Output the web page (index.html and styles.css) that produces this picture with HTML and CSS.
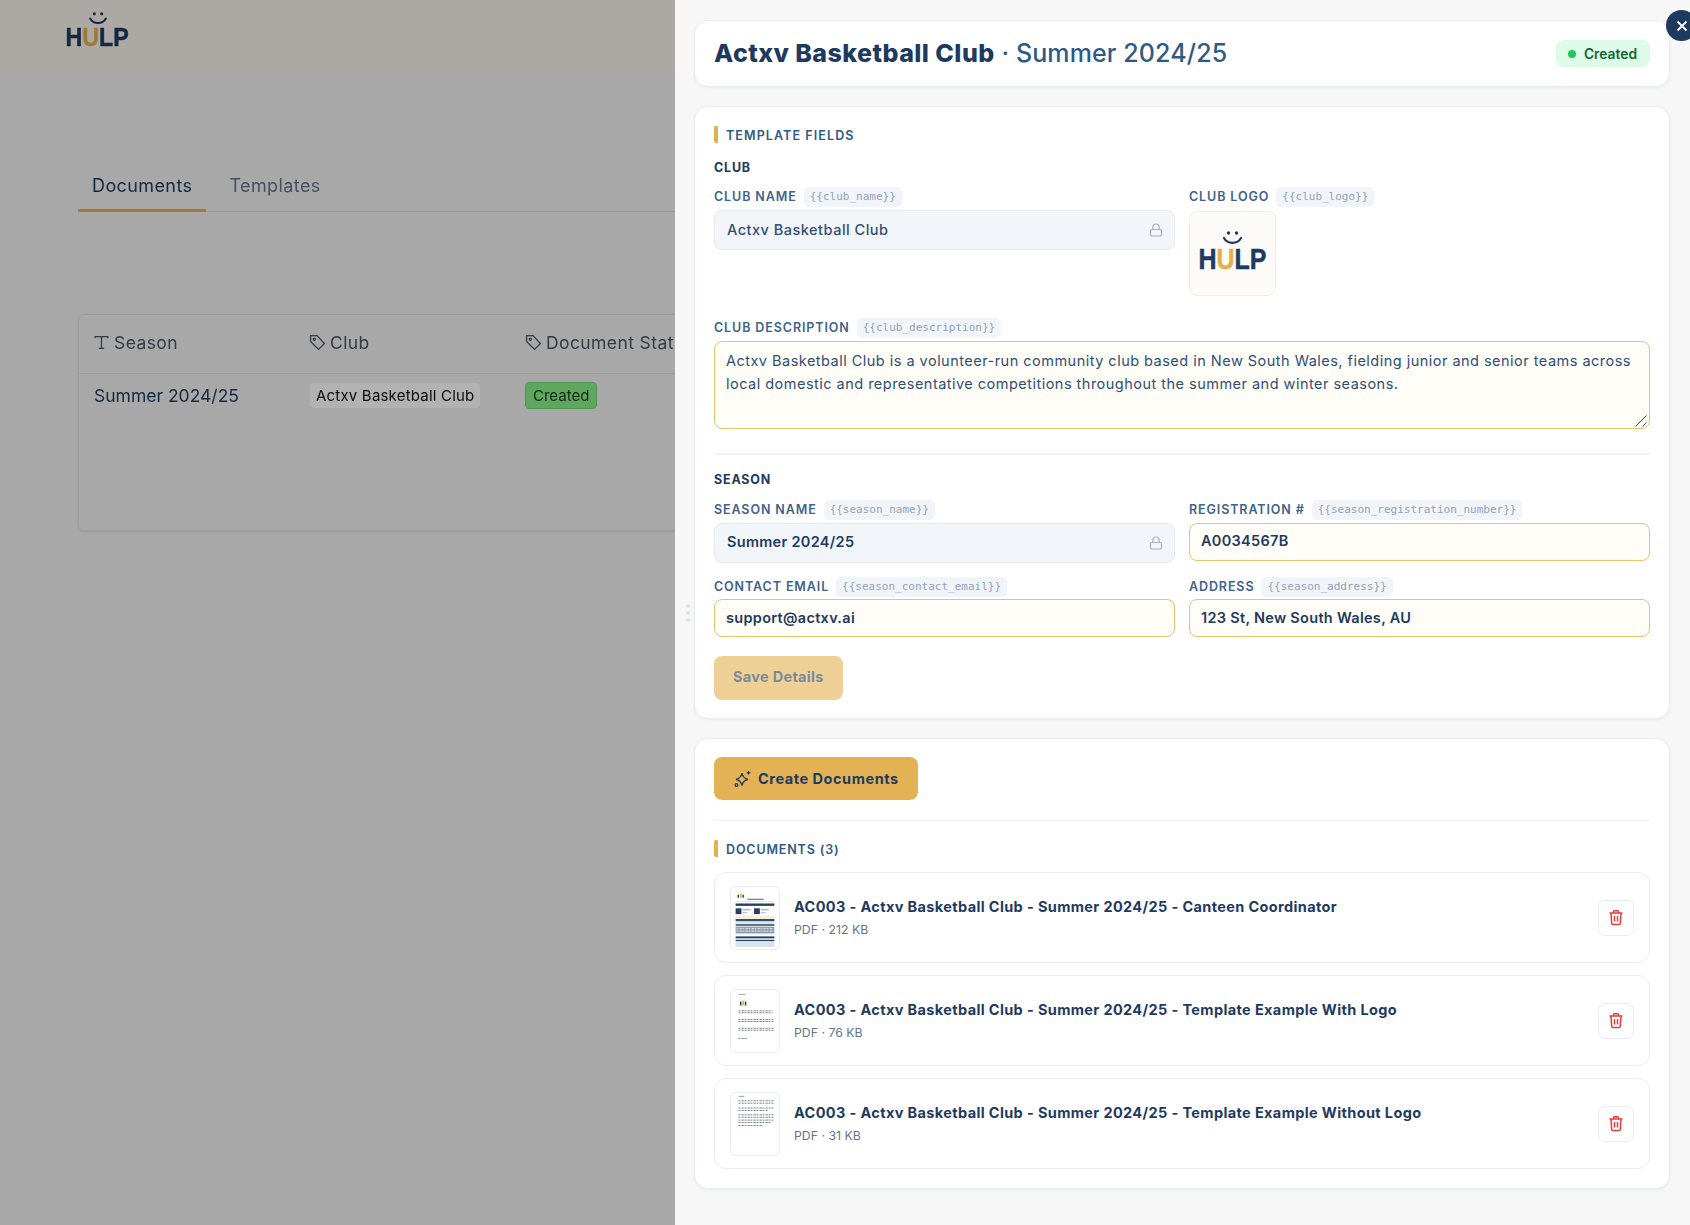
FILE: index.html
```html
<!DOCTYPE html>
<html lang="en">
<head>
    <meta charset="UTF-8">
    <title>Documents</title>
    <link rel="stylesheet" href="styles.css">
</head>
<body>
    <div class="page">
        <header class="topbar">
            <div class="logo logo-small">
                <svg class="smile" viewBox="0 0 20 14"><circle cx="6" cy="2" r="1.7"/><circle cx="14" cy="2" r="1.7"/><path d="M1.5 7C5 13.5 15 13.5 18.5 7"/></svg>
                <div class="logo-word">H<span class="gold">U</span>LP</div>
            </div>
        </header>
        <main class="content">
            <nav class="tabs">
                <a class="tab active">Documents</a>
                <a class="tab">Templates</a>
            </nav>
            <div class="table-card">
                <div class="table-row table-head">
                    <div class="cell"><svg class="head-icon" viewBox="0 0 16 16"><path d="M2 4V2.5h12V4M8 2.5v11M5.5 13.5h5"/></svg>Season</div>
                    <div class="cell"><svg class="head-icon" viewBox="0 0 16 16"><path d="M1.5 1.5h6l7 7.5-5.500 5.500-7.500-7.500z"/><circle cx="5" cy="5" r="1"/></svg>Club</div>
                    <div class="cell"><svg class="head-icon" viewBox="0 0 16 16"><path d="M1.5 1.5h6l7 7.5-5.500 5.500-7.500-7.500z"/><circle cx="5" cy="5" r="1"/></svg>Document Status</div>
                </div>
                <div class="table-row">
                    <div class="cell">Summer 2024/25</div>
                    <div class="cell"><span class="tag">Actxv Basketball Club</span></div>
                    <div class="cell"><span class="status-tag">Created</span></div>
                </div>
            </div>
        </main>
    </div>
    <div class="backdrop"></div>

    <aside class="drawer">
        <button class="close-btn"><svg viewBox="0 0 14 14"><path d="M2.5 2.5l9 9M11.5 2.5l-9 9"/></svg></button>
        <div class="drag-handle"><i></i><i></i><i></i></div>

        <section class="card title-card">
            <h1><strong>Actxv Basketball Club</strong> · Summer 2024/25</h1>
            <span class="badge"><i class="dot"></i>Created</span>
        </section>

        <section class="card fields-card">
            <h2 class="bar-heading">TEMPLATE FIELDS</h2>
            <h3 class="group-title">CLUB</h3>
            <div class="field-grid">
                <div class="field">
                    <label class="label">CLUB NAME <code>{{club_name}}</code></label>
                    <div class="input locked">Actxv Basketball Club
                        <svg class="lock" viewBox="0 0 14 14"><rect x="1.5" y="6.5" width="11" height="6.5" rx="1.2"/><path d="M3.8 6.5V4.2a3.2 3.2 0 0 1 6.4 0v2.300"/></svg>
                    </div>
                </div>
                <div class="field">
                    <label class="label">CLUB LOGO <code>{{club_logo}}</code></label>
                    <div class="logo-box">
                        <div class="logo">
                            <svg class="smile" viewBox="0 0 20 14"><circle cx="6" cy="2" r="1.7"/><circle cx="14" cy="2" r="1.7"/><path d="M1.5 7C5 13.5 15 13.5 18.5 7"/></svg>
                            <div class="logo-word">H<span class="gold">U</span>LP</div>
                        </div>
                    </div>
                </div>
                <div class="field wide">
                    <label class="label">CLUB DESCRIPTION <code>{{club_description}}</code></label>
                    <div class="description-wrap">
                        <textarea class="input editable description" readonly>Actxv Basketball Club is a volunteer-run community club based in New South Wales, fielding junior and senior teams across
local domestic and representative competitions throughout the summer and winter seasons.</textarea>
                        <svg class="grip" viewBox="0 0 12 12"><path d="M0.5 11.500L11.500 0.500M7.500 11.500L11.500 7.500"/></svg>
                    </div>
                </div>
            </div>
            <hr class="rule">
            <h3 class="group-title">SEASON</h3>
            <div class="field-grid season-grid">
                <div class="field">
                    <label class="label">SEASON NAME <code>{{season_name}}</code></label>
                    <div class="input locked strong">Summer 2024/25
                        <svg class="lock" viewBox="0 0 14 14"><rect x="1.5" y="6.5" width="11" height="6.5" rx="1.2"/><path d="M3.8 6.5V4.2a3.2 3.2 0 0 1 6.4 0v2.300"/></svg>
                    </div>
                </div>
                <div class="field">
                    <label class="label">REGISTRATION # <code>{{season_registration_number}}</code></label>
                    <div class="input editable strong">A0034567B</div>
                </div>
                <div class="field">
                    <label class="label">CONTACT EMAIL <code>{{season_contact_email}}</code></label>
                    <div class="input editable strong">support@actxv.ai</div>
                </div>
                <div class="field">
                    <label class="label">ADDRESS <code>{{season_address}}</code></label>
                    <div class="input editable strong">123 St, New South Wales, AU</div>
                </div>
            </div>
            <button class="btn save-btn">Save Details</button>
        </section>

        <section class="card docs-card">
            <button class="btn create-btn">
                <svg viewBox="0 0 18 18"><path d="M8 3c.7 3.800 2.500 5.600 6 6.300-3.500.7-5.300 2.500-6 6.300-.7-3.800-2.500-5.600-6-6.300 3.500-.7 5.300-2.500 6-6.300z"/><path d="M14.500 1v3.600M12.700 2.800h3.600"/><circle cx="2.500" cy="15" r="1.400"/></svg>
                Create Documents
            </button>
            <hr class="rule thin">
            <h2 class="bar-heading docs-heading">DOCUMENTS (3)</h2>
            <ul class="doc-list">
                <li class="doc">
                    <div class="thumb">
                        <svg viewBox="0 0 48 64">
                            <rect x="5" y="5" width="9" height="7" fill="#fbf8ee"/>
                            <rect x="6" y="8" width="1.5" height="3" fill="#24425f"/><rect x="8.5" y="7" width="1.5" height="4" fill="#d9a83e"/><rect x="11" y="8" width="1.5" height="3" fill="#24425f"/>
                            <rect x="16" y="12" width="17" height="1.5" fill="#7f8b98"/>
                            <rect x="4" y="14.5" width="40" height="1" fill="#f8e6bb"/>
                            <rect x="4" y="17" width="40" height="2.5" fill="#24425f"/>
                            <rect x="4" y="22" width="6" height="6" fill="#24425f"/><rect x="23" y="22" width="6" height="6" fill="#24425f"/>
                            <rect x="11" y="23" width="8" height="1" fill="#8897a8"/><rect x="30" y="23" width="8" height="1" fill="#8897a8"/>
                            <rect x="11" y="26" width="5" height="1" fill="#aab5c0"/><rect x="30" y="26" width="5" height="1" fill="#aab5c0"/>
                            <rect x="4" y="29.5" width="40" height="3" fill="#fcefcf"/>
                            <rect x="4" y="33" width="40" height="2.5" fill="#2f4d6c"/>
                            <rect x="4" y="35.5" width="40" height="3" fill="#dbe5ef"/>
                            <rect x="4" y="38.5" width="40" height="1.5" fill="#24425f"/>
                            <rect x="4" y="41" width="40" height="7" fill="#8f9dac"/>
                            <path class="dash dark" d="M5 43h38M5 45.500h38"/>
                            <rect x="4" y="51" width="40" height="2" fill="#24425f"/>
                            <rect x="4" y="54.5" width="40" height="1.5" fill="#24425f"/>
                            <rect x="4" y="56" width="40" height="6" fill="#d6e2ee"/>
                        </svg>
                    </div>
                    <div class="doc-text">
                        <div class="doc-name">AC003 - Actxv Basketball Club - Summer 2024/25 - Canteen Coordinator</div>
                        <div class="doc-meta">PDF · 212 KB</div>
                    </div>
                    <button class="delete-btn"><svg viewBox="0 0 16 16"><path d="M1.5 3.5h13M5.5 3.5V2.200q0-.9.9-.9h3.200q.9 0 .9.9v1.300M3 3.5l.6 10q.1 1.500 1.500 1.500h5.800q1.400 0 1.500-1.500l.6-10M6.500 6.500v5.500M9.500 6.500v5.500"/></svg></button>
                </li>
                <li class="doc">
                    <div class="thumb">
                        <svg viewBox="0 0 48 64">
                            <rect x="7" y="4" width="7" height="1" fill="#9aa7b5"/>
                            <rect x="7" y="7" width="10" height="10" fill="#fbf8ee"/>
                            <rect x="8.5" y="12" width="1.5" height="4" fill="#24425f"/><rect x="11" y="11" width="1.5" height="5" fill="#d9a83e"/><rect x="13.5" y="12" width="1.5" height="4" fill="#24425f"/>
                            <path class="dash" d="M7 21.500h35M7 23.500h35M7 30.500h36M7 32.500h36M7 39.500h36M7 41.500h36M7 50h9"/>
                        </svg>
                    </div>
                    <div class="doc-text">
                        <div class="doc-name">AC003 - Actxv Basketball Club - Summer 2024/25 - Template Example With Logo</div>
                        <div class="doc-meta">PDF · 76 KB</div>
                    </div>
                    <button class="delete-btn"><svg viewBox="0 0 16 16"><path d="M1.5 3.5h13M5.5 3.5V2.200q0-.9.9-.9h3.200q.9 0 .9.9v1.300M3 3.5l.6 10q.1 1.500 1.500 1.500h5.800q1.400 0 1.500-1.500l.6-10M6.500 6.500v5.500M9.500 6.500v5.500"/></svg></button>
                </li>
                <li class="doc">
                    <div class="thumb">
                        <svg viewBox="0 0 48 64">
                            <rect x="7" y="3" width="6" height="1" fill="#9aa7b5"/>
                            <path class="dash" d="M7 8h36M7 10.500h36M7 15.500h36M7 18h30M7 22.500h36M7 25h36M7 28h36M7 30.500h34M7 33.500h24"/>
                        </svg>
                    </div>
                    <div class="doc-text">
                        <div class="doc-name">AC003 - Actxv Basketball Club - Summer 2024/25 - Template Example Without Logo</div>
                        <div class="doc-meta">PDF · 31 KB</div>
                    </div>
                    <button class="delete-btn"><svg viewBox="0 0 16 16"><path d="M1.5 3.5h13M5.5 3.5V2.200q0-.9.9-.9h3.200q.9 0 .9.9v1.300M3 3.5l.6 10q.1 1.500 1.500 1.500h5.800q1.400 0 1.500-1.500l.6-10M6.500 6.500v5.500M9.500 6.500v5.500"/></svg></button>
                </li>
            </ul>
        </section>
    </aside>
</body>
</html>
```
FILE: styles.css
```css
* {
    box-sizing: border-box;
}

html, body {
    margin: 0;
    height: 100%;
    overflow: hidden;
}

body {
    font-family: Inter, "Noto Sans", sans-serif;
    color: #1e3a5f;
    background: #f1f1f1;
}

/* page behind the drawer */
.page {
    height: 100%;
    filter: blur(0.7px);
}

.topbar {
    height: 73px;
    padding: 12px 0 0 66px;
    background: #f6f3ec;
}

.logo {
    display: flex;
    flex-direction: column;
    align-items: center;
    width: 68px;
    padding-bottom: 6px;
}

.logo-small {
    width: 63px;
    padding-bottom: 0;
}

.smile {
    width: 21px;
    height: 14px;
    fill: #1e3a5f;
}

.smile path {
    fill: none;
    stroke: #1e3a5f;
    stroke-width: 2.2;
    stroke-linecap: round;
}

.logo-word {
    margin-top: 3px;
    font-family: "Liberation Sans", sans-serif;
    font-size: 29px;
    line-height: 22px;
    font-weight: 700;
    color: #1e3a5f;
    -webkit-text-stroke: 0.5px currentColor;
    transform: scaleX(0.86);
}

.logo-small .smile {
    width: 20px;
    height: 13px;
}

.logo-small .logo-word {
    margin-top: 3px;
    font-size: 25px;
    line-height: 18px;
    transform: scaleX(0.93);
}

.gold {
    color: #e3b04f;
}

.content {
    padding: 0 78px;
}

.tabs {
    display: flex;
    gap: 9px;
    height: 52px;
    margin-top: 87px;
    border-bottom: 1px solid #dde1e6;
}

.tab {
    display: block;
    padding: 0 14px;
    height: 52px;
    line-height: 52px;
    font-size: 18px;
    letter-spacing: 0.4px;
    color: #64748b;
}

.tab.active {
    color: #1e3a5f;
    border-bottom: 3px solid #e3b04f;
}

.table-card {
    margin-top: 102px;
    height: 217px;
    border: 1px solid #dde1e6;
    border-radius: 6px;
    box-shadow: 0 1px 3px rgba(0, 0, 0, 0.1);
}

.table-row {
    display: grid;
    grid-template-columns: 216px 216px 1fr;
    padding: 0 15px;
    align-items: center;
    height: 42px;
    font-size: 17.5px;
    color: #1e3a5f;
}

.table-head {
    height: 59px;
    padding-bottom: 3px;
    border-bottom: 1px solid #dde1e6;
    letter-spacing: 0.4px;
    color: #475569;
}

.cell {
    display: flex;
    align-items: center;
    white-space: nowrap;
}

.head-icon {
    width: 17px;
    height: 17px;
    margin: 0 4px 0 -1px;
    fill: none;
    stroke: #475569;
    stroke-width: 1.2;
}

.tag {
    padding: 3px 6px;
    font-size: 15px;
    letter-spacing: 0.2px;
    color: #111;
    background: #fff;
    border-radius: 4px;
}

.status-tag {
    margin-left: -1px;
    padding: 3px 7px;
    font-size: 15px;
    color: #1b3a1b;
    background: #88f088;
    border: 1px solid #6fd86f;
    border-radius: 4px;
}

.backdrop {
    position: fixed;
    inset: 0;
    background: rgba(0, 0, 0, 0.3);
}

/* drawer */
.drawer {
    position: fixed;
    top: 0;
    right: 0;
    bottom: 0;
    width: 1015px;
    padding: 20px 20px 0 19px;
    background: #f7f7f7;
}

.close-btn {
    position: absolute;
    top: 10px;
    left: 991px;
    width: 31px;
    height: 31px;
    padding: 0;
    border: none;
    border-radius: 50%;
    background: #1e3a5f;
    display: flex;
    align-items: center;
    justify-content: center;
}

.close-btn svg {
    width: 14px;
    height: 14px;
    fill: none;
    stroke: #fff;
    stroke-width: 1.8;
}

.drag-handle {
    position: absolute;
    top: 604px;
    left: 11px;
    display: flex;
    flex-direction: column;
    gap: 3px;
}

.drag-handle i {
    width: 4px;
    height: 4px;
    border-radius: 50%;
    background: #dfe2e5;
}

.card {
    background: #fff;
    border: 1px solid #e9edf1;
    border-radius: 14px;
    box-shadow: 0 1px 3px rgba(30, 58, 95, 0.06);
    padding: 0 19px;
    margin-bottom: 19px;
}

.title-card {
    display: flex;
    align-items: center;
    justify-content: space-between;
    height: 67px;
}

h1 {
    margin: 0 0 2px;
    font-size: 25px;
    font-weight: 500;
    color: #2f5a85;
    letter-spacing: 0.12px;
}

h1 strong {
    font-weight: 800;
    color: #1e3a5f;
    letter-spacing: 0.45px;
}

.badge {
    display: flex;
    align-items: center;
    gap: 8px;
    height: 27px;
    padding: 0 13px 0 12px;
    border-radius: 8px;
    background: #dcfce7;
    color: #166534;
    font-size: 13.8px;
    font-weight: 600;
}

.dot {
    width: 8px;
    height: 8px;
    border-radius: 50%;
    background: #22c55e;
}

.fields-card {
    height: 613px;
    padding-top: 19px;
}

.bar-heading {
    margin: 0;
    padding-left: 8px;
    height: 17px;
    line-height: 19px;
    font-size: 12.5px;
    font-weight: 600;
    letter-spacing: 1.1px;
    color: #2f5a85;
    border-left: 4px solid #e3b04f;
    border-radius: 2px;
}

.group-title {
    margin: 16px 0 0;
    height: 16px;
    line-height: 18px;
    font-size: 12.5px;
    font-weight: 700;
    letter-spacing: 0.8px;
    color: #1e3a5f;
}

.field-grid {
    display: grid;
    grid-template-columns: 461px 461px;
    column-gap: 14px;
    margin-top: 10px;
}

.field {
    min-width: 0;
}

.field.wide {
    grid-column: 1 / 3;
    margin-top: 20px;
}

.label {
    display: flex;
    align-items: center;
    gap: 7px;
    height: 21px;
    margin-top: 1px;
    margin-bottom: 3px;
    font-size: 12.5px;
    font-weight: 600;
    letter-spacing: 0.9px;
    color: #3f638a;
}

code {
    padding: 0 6px;
    height: 20px;
    line-height: 20px;
    font-family: "DejaVu Sans Mono", "Liberation Mono", monospace;
    font-size: 11px;
    font-weight: 400;
    letter-spacing: 0;
    color: #94a3b8;
    background: #f1f5f9;
    border-radius: 5px;
}

.input {
    display: flex;
    align-items: center;
    justify-content: space-between;
    width: 100%;
    padding: 0 12px 2px;
    font-family: inherit;
    font-size: 14.5px;
    font-weight: 500;
    letter-spacing: 0.5px;
    color: #1e3a5f;
    border-radius: 8px;
}

.input.strong {
    font-weight: 600;
    letter-spacing: 0.3px;
}

.locked {
    height: 40px;
    background: #f2f5f9;
    border: 1px solid #e6eaf0;
    color: #2f4f74;
}

.locked.strong {
    color: #1e3a5f;
}

.lock {
    width: 14px;
    height: 14px;
    margin: 2px -1px 0 0;
    fill: none;
    stroke: #a6b2c2;
    stroke-width: 1.2;
}

.editable {
    height: 38px;
    padding-left: 11px;
    background: #fffdf8;
    border: 1.5px solid #eec06c;
}

.description-wrap {
    position: relative;
    height: 88px;
}

.description {
    display: block;
    height: 88px;
    padding: 7px 11px;
    line-height: 23px;
    font-weight: 400;
    letter-spacing: 0.48px;
    color: #2f4f74;
    white-space: pre;
    overflow: hidden;
    resize: none;
    outline: none;
}

.grip {
    position: absolute;
    right: 3px;
    bottom: 2px;
    width: 12px;
    height: 12px;
    fill: none;
    stroke: #4a4a4a;
    stroke-width: 1;
}

.logo-box {
    display: flex;
    align-items: center;
    justify-content: center;
    width: 87px;
    height: 85px;
    margin-top: 4px;
    background: #fcfbf7;
    border: 1px solid #eceef1;
    border-radius: 8px;
}

.rule {
    margin: 24px 0 0;
    border: none;
    height: 2px;
    background: #f0f3f7;
}

.rule.thin {
    margin: 20px 0 0;
    height: 1px;
}

.rule + .group-title {
    margin-top: 16px;
}

.season-grid {
    margin-top: 11px;
    row-gap: 12px;
}

.season-grid .label {
    margin-bottom: 2px;
}

.season-grid .field:nth-child(-n+2) {
    height: 65px;
}

.season-grid .field:nth-child(-n+2) .label {
    margin-bottom: 3px;
}

.season-grid .field:nth-child(-n+2) .input {
    padding-bottom: 3px;
}

.btn {
    display: inline-flex;
    align-items: center;
    gap: 6px;
    border: none;
    border-radius: 8px;
    font-family: inherit;
    font-size: 14.5px;
    font-weight: 700;
    letter-spacing: 0.3px;
}

.save-btn {
    margin-top: 19px;
    height: 44px;
    padding: 0 19px 3px;
    background: #eed096;
    color: #7b8a99;
}

.docs-card {
    padding-top: 18px;
    height: 451px;
}

.docs-heading {
    margin-top: 19px;
    letter-spacing: 0.85px;
}

.create-btn {
    height: 43px;
    padding: 0 19px 0 20px;
    letter-spacing: 0.55px;
    background: #e3b255;
    color: #1e3a5f;
}

.create-btn svg {
    width: 18px;
    height: 18px;
    fill: none;
    stroke: #1e3a5f;
    stroke-width: 1.3;
}

.doc-list {
    list-style: none;
    margin: 15px 0 0;
    padding: 0;
    display: flex;
    flex-direction: column;
    gap: 12px;
}

.doc {
    display: flex;
    align-items: center;
    gap: 14px;
    height: 91px;
    padding: 0 15px;
    border: 1px solid #e9edf1;
    border-radius: 12px;
}

.thumb {
    flex: none;
    width: 50px;
    height: 64px;
    background: #fff;
    border: 1px solid #e9edf1;
    border-radius: 5px;
    overflow: hidden;
}

.thumb svg {
    display: block;
    width: 100%;
    height: 100%;
}

.dash {
    fill: none;
    stroke: #6f7c8a;
    stroke-width: 1;
    stroke-dasharray: 1.5 0.6 0.8 0.5 2 0.8;
}

.dash.dark {
    stroke: #e8edf2;
}

.doc-text {
    flex: 1;
    padding-bottom: 1px;
}

.doc-name {
    font-size: 14.5px;
    font-weight: 700;
    letter-spacing: 0.37px;
    color: #1e3a5f;
}

.doc-meta {
    margin-top: 7px;
    font-size: 12.3px;
    color: #64748b;
}

.delete-btn {
    flex: none;
    width: 36px;
    height: 36px;
    padding: 0;
    display: flex;
    align-items: center;
    justify-content: center;
    background: #fff;
    border: 1px solid #e9edf1;
    border-radius: 7px;
}

.delete-btn svg {
    width: 16px;
    height: 17px;
    fill: none;
    stroke: #e53e3e;
    stroke-width: 1.5;
}
```
